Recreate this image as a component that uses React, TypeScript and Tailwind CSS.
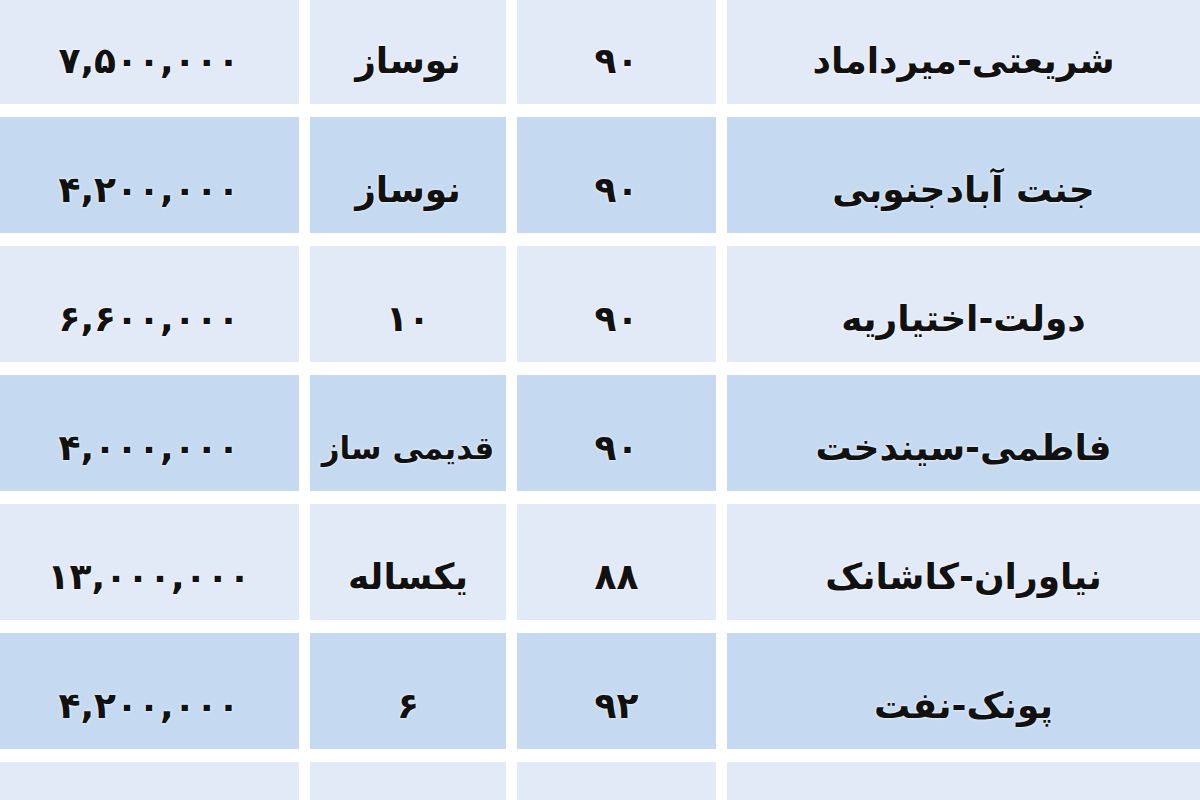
/* eslint-disable */
//@ts-nocheck
import React from "react";

const rows = [
  ["شریعتی-میرداماد", "۹۰", "نوساز", "۷,۵۰۰,۰۰۰"],
  ["جنت آبادجنوبی", "۹۰", "نوساز", "۴,۲۰۰,۰۰۰"],
  ["دولت-اختیاریه", "۹۰", "۱۰", "۶,۶۰۰,۰۰۰"],
  ["فاطمی-سیندخت", "۹۰", "قدیمی ساز", "۴,۰۰۰,۰۰۰"],
  ["نیاوران-کاشانک", "۸۸", "یکساله", "۱۳,۰۰۰,۰۰۰"],
  ["پونک-نفت", "۹۲", "۶", "۴,۲۰۰,۰۰۰"],
  ["", "", "", ""],
];

export default function App() {
  return (
    <div
      dir="rtl"
      className="h-[800px] w-[1200px] overflow-hidden bg-white"
      style={{ fontFamily: '"DejaVu Sans", sans-serif' }}>
      <div className="-mt-[12px] flex flex-col gap-[13px]">
        {rows.map((r, i) => (
          <div
            key={i}
            className="grid h-[116px] shrink-0 grid-cols-[473px_199px_196px_300px] gap-x-[11px]">
            {r.map((c, j) => (
              <div
                key={j}
                className={`flex h-[116px] items-center justify-center whitespace-nowrap pt-[30px] font-bold text-[#111] [text-shadow:0_0_3px_#fff] ${
                  i % 2 ? "bg-[#c5daf1]" : "bg-[#e2eaf7]"
                } ${c === "قدیمی ساز" ? "text-[31px] tracking-[-1px]" : "text-[36px]"}`}>
                {c}
              </div>
            ))}
          </div>
        ))}
      </div>
    </div>
  );
}
